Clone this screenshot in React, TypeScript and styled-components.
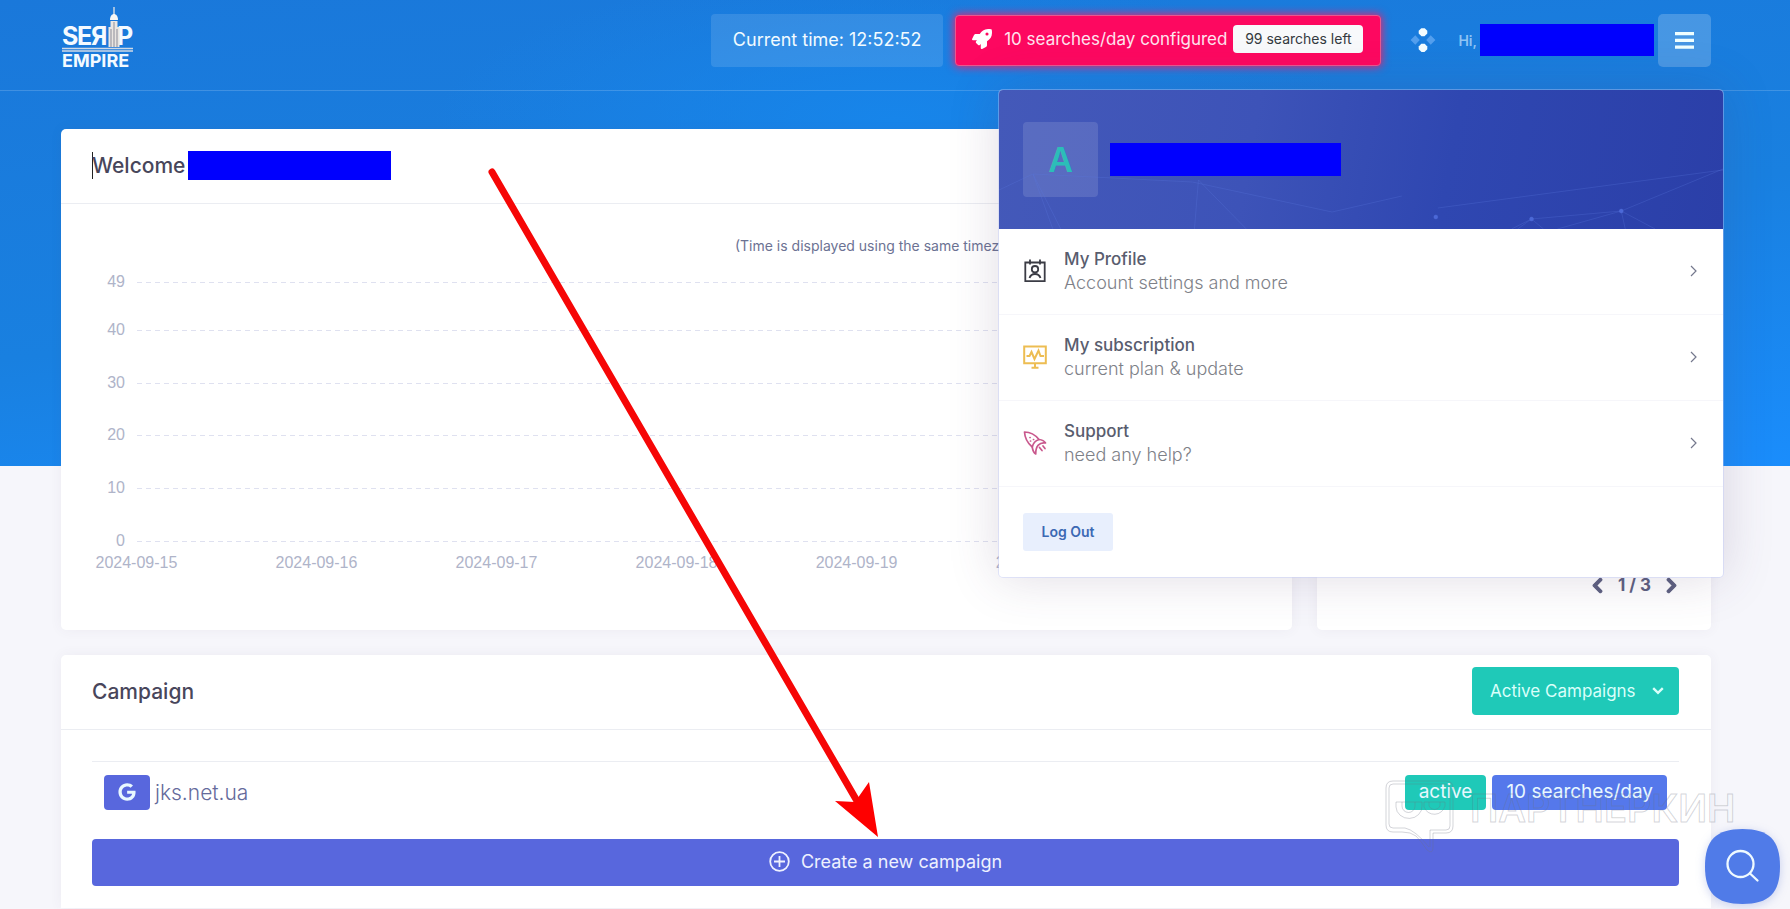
import React from 'react';
import styled, { createGlobalStyle } from 'styled-components';
import { FaChevronLeft, FaChevronRight, FaGoogle, FaRocket } from 'react-icons/fa';

const Global = createGlobalStyle`
  *, *::before, *::after { box-sizing: border-box; }
  body { margin: 0; background: #f6f6fb; font-family: Inter, "Open Sans", sans-serif; color: #48465b; }
  button, select { font: inherit; border: 0; cursor: pointer; }
  a { color: inherit; text-decoration: none; }
  h1, h2, p { margin: 0; }
`;

const Page = styled.div`
  position: relative;
  min-height: 100vh;
  overflow: hidden;
  background:
    radial-gradient(ellipse 460px 150px at 50% 120px, #1785ea, transparent) no-repeat 0 0 / 100% 466px,
    linear-gradient(174deg, #1a78da 0%, #1980e0 55%, #1a8dfc 100%) no-repeat 0 0 / 100% 466px,
    #f6f6fb;
`;

const Header = styled.header`
  position: relative;
  z-index: 2;
  display: flex;
  align-items: center;
  height: 91px;
  padding: 0 79px 10px 61px;
  border-bottom: 1px solid rgba(255, 255, 255, 0.17);
`;

const LogoLink = styled.a`
  display: block;
  margin-right: auto;
  svg { display: block; }
`;

const TimeBox = styled.div`
  width: 232px;
  padding: 13px 0 14px;
  margin-right: 12px;
  border-radius: 4px;
  background: rgba(255, 255, 255, 0.12);
  color: #f2fbff;
  font-size: 18px;
  line-height: 26px;
  text-align: center;
  white-space: nowrap;
`;

const QuotaButton = styled.button`
  display: flex;
  align-items: center;
  height: 51px;
  padding: 0 17px 2px 16px;
  margin-right: 29px;
  border: 1px solid #e8588f;
  border-radius: 4px;
  background: #fd0860;
  box-shadow: 0 0 9px 1px #e9216f;
  color: #ffe3ee;
  font-size: 17px;
  white-space: nowrap;
  > svg { color: #fff; margin-right: 12px; }
`;

const QuotaLeft = styled.span`
  width: 130px;
  margin-left: 6px;
  border-radius: 4px;
  background: #f8f9fb;
  color: #343a40;
  font-size: 14px;
  line-height: 28px;
  text-align: center;
`;

const AppsButton = styled.button`
  display: flex;
  padding: 0;
  margin-right: 22px;
  background: none;
`;

const Greeting = styled.span`
  margin-right: 3px;
  color: #8fc4f4;
  font-size: 14px;
  font-weight: 600;
`;

const Redacted = styled.span<{ $w: number; $h: number }>`
  display: inline-block;
  width: ${(p) => p.$w}px;
  height: ${(p) => p.$h}px;
  background: #0000fe;
`;

const MenuButton = styled.button`
  display: grid;
  place-items: center;
  width: 53px;
  height: 53px;
  margin-left: 4px;
  border-radius: 5px;
  background: rgba(255, 255, 255, 0.2);
`;

const UserPanel = styled.section`
  position: absolute;
  top: 89px;
  right: 66px;
  width: 726px;
  border: 1px solid rgba(190, 200, 250, 0.4);
  border-radius: 5px;
  background: #fff;
  background-clip: padding-box;
  box-shadow: 0 0 50px rgba(82, 63, 105, 0.18);
  overflow: hidden;
`;

const PanelHead = styled.div`
  display: flex;
  align-items: center;
  height: 139px;
  padding: 0 24px;
  background: linear-gradient(100deg, #4459b9 0%, #3d53b8 35%, #2f47b1 62%, #2b3fa8 100%);
`;

const Web = styled.svg`
  position: absolute;
  top: 0;
  left: 0;
  width: 100%;
  height: 139px;
`;

const Avatar = styled.span`
  display: grid;
  place-items: center;
  width: 75px;
  height: 75px;
  margin-right: 12px;
  border-radius: 4px;
  background: rgba(255, 255, 255, 0.12);
  color: #2cbdb8;
  font-size: 34px;
  font-weight: 600;
`;

const PanelItem = styled.a`
  display: flex;
  align-items: center;
  height: 86px;
  padding: 0 26px 2px 24px;
  border-bottom: 1px solid #f6f6fa;
`;

const ItemText = styled.span`
  flex: 1;
  display: grid;
  margin-left: 17px;
  line-height: 24px;
`;

const ItemTitle = styled.span`
  color: #595d6e;
  font-size: 17px;
  font-weight: 500;
`;

const ItemNote = styled.span`
  color: #7e8188;
  font-size: 18px;
  font-weight: 300;
`;

const PanelFoot = styled.div`
  padding: 26px 24px;
`;

const LogOut = styled.button`
  display: block;
  width: 90px;
  border-radius: 3px;
  background: #e8effd;
  color: #3c69b4;
  font-size: 14px;
  font-weight: 600;
  line-height: 38px;
  padding: 0;
`;

const Main = styled.main`
  display: grid;
  gap: 25px;
  padding: 38px 79px 0 61px;
`;

const TopRow = styled.div`
  display: grid;
  grid-template-columns: minmax(0, 25fr) minmax(0, 8fr);
  gap: 25px;
`;

const Card = styled.section<{ $flush?: boolean }>`
  border-radius: ${(p) => (p.$flush ? '5px 5px 0 0' : '5px')};
  background: #fff;
  box-shadow: 0 0 13px rgba(82, 63, 105, 0.06);
`;

const CardHead = styled.div`
  display: flex;
  align-items: center;
  height: 75px;
  padding: 0 32px 2px 31px;
  border-bottom: 1px solid #ebedf2;
`;

const CardTitle = styled.h2`
  display: flex;
  align-items: center;
  font-size: 21px;
  font-weight: 500;
  white-space: nowrap;
  ${Redacted} { margin-left: 3px; }
`;

const Caret = styled.span`
  width: 1px;
  height: 27px;
  margin-right: -1px;
  background: #222;
`;

const ChartBody = styled.div`
  padding: 29px 31px 51px;
`;

const ChartNote = styled.p`
  margin-left: 55%;
  color: #6c7293;
  font-size: 14px;
  line-height: 26px;
  white-space: nowrap;
`;

const Chart = styled.svg`
  display: block;
  width: 100%;
  height: 320px;
  overflow: visible;
  text { fill: #afb4c9; font: 16px "Liberation Sans", Arial, sans-serif; }
  line { stroke: #dfe1f0; stroke-width: 1; stroke-dasharray: 5 4; shape-rendering: crispEdges; }
`;

const PagerCard = styled(Card)`
  display: flex;
  align-items: flex-end;
  justify-content: flex-end;
  padding: 0 31px 33px;
`;

const Pager = styled.nav`
  display: flex;
  align-items: center;
  gap: 12px;
  color: #5d6080;
  font-size: 17px;
  font-weight: 700;
  line-height: 24px;
  button { display: flex; padding: 0; background: none; color: inherit; }
  path { stroke: currentColor; stroke-width: 36; }
`;

const StatusPicker = styled.label`
  display: grid;
  align-items: center;
  margin-left: auto;
  > * { grid-area: 1 / 1; }
  svg { justify-self: end; margin-right: 15px; pointer-events: none; }
`;

const StatusSelect = styled.select`
  appearance: none;
  width: 207px;
  height: 48px;
  padding: 0 18px;
  border-radius: 4px;
  background: #1fc9b8;
  color: #d9fffa;
  font-size: 17px;
`;

const CampaignBody = styled.div`
  padding: 31px 32px 22px 31px;
`;

const CampaignTable = styled.table`
  width: 100%;
  border-collapse: separate;
  border-spacing: 0;
  border-top: 1px solid #ebedf2;
  td { padding: 13px 12px 29px; }
`;

const Cell = styled.div<{ $end?: boolean }>`
  display: flex;
  align-items: center;
  gap: ${(p) => (p.$end ? 6 : 5)}px;
  justify-content: ${(p) => (p.$end ? 'flex-end' : 'flex-start')};
`;

const Badge = styled.span<{ $bg: string }>`
  display: flex;
  align-items: center;
  height: 35px;
  padding: 0 14px 2px;
  border-radius: 4px;
  background: ${(p) => p.$bg};
  color: #e8f8ff;
  font-size: 19px;
`;

const SiteLink = styled.a`
  color: #656a9b;
  font-size: 21px;
  font-weight: 300;
`;

const CreateButton = styled.button`
  display: flex;
  align-items: center;
  justify-content: center;
  gap: 11px;
  width: 100%;
  height: 47px;
  padding: 0 0 2px;
  border-radius: 4px;
  background: #5867dd;
  color: #eef1ff;
  font-size: 18px;
`;

const Arrow = styled.svg`
  position: absolute;
  z-index: 3;
  top: 160px;
  left: 480px;
  pointer-events: none;
`;

const Watermark = styled.svg`
  position: absolute;
  z-index: 3;
  right: 40px;
  top: 777px;
  pointer-events: none;
  fill: none;
  stroke: rgba(110, 114, 130, 0.3);
  text { font: 600 38px Inter, sans-serif; }
`;

const SearchButton = styled.button`
  position: fixed;
  z-index: 4;
  right: 10px;
  bottom: 5px;
  width: 75px;
  height: 75px;
  padding: 0;
  background: none;
  filter: drop-shadow(0 2px 5px rgba(60, 90, 200, 0.25));
  svg { display: block; }
`;

const Logo = () => (
  <svg width="76" height="66" viewBox="0 0 76 66" role="img" aria-label="Serp Empire">
    <g fill="#f4faff" fontFamily="Inter, sans-serif" fontWeight="700">
      <g fontSize="25">
        <text x="1" y="38">S</text>
        <text x="16" y="38">E</text>
        <text x="30" y="38">Я</text>
        <text x="56" y="38">P</text>
      </g>
      <text x="1" y="60" fontSize="18">EMPIRE</text>
    </g>
    <path d="M53 0v9" stroke="#d6dde6" strokeWidth="1.4" />
    <path d="M49 13c0-4 2-6 4-6s4 2 4 6z" fill="#f6f6f4" />
    <path d="M49.500 14h7v6h2v20H47.500V20h2z" fill="#e9e6e2" />
    <path d="M50 22v18M53 15v25M56 22v18" stroke="#8c8d99" strokeWidth="1" />
    <path d="M1 41.500h71M1 44h71" stroke="#cfd9e6" strokeWidth="1.400" />
  </svg>
);

const ProfileIcon = () => (
  <svg width="24" height="26" viewBox="0 0 24 26" fill="none" stroke="#3b3c45" strokeWidth="1.8">
    <path d="M2.300 4.500h19.400v18.700H2.300zM7 1.500v5M17 1.500v5" />
    <circle cx="12" cy="11.200" r="3.200" />
    <path d="M6.500 20c1-3 3-4 5.500-4s4.500 1 5.500 4" />
  </svg>
);

const SubscriptionIcon = () => (
  <svg width="24" height="26" viewBox="0 0 24 26" fill="none" stroke="#edbd52" strokeWidth="2">
    <path d="M1.200 2.500h21.600v16.800H1.200zM12 19.500v4M8.500 23.700h7" />
    <path d="M3.500 12h3l2-4 3 7 4-8.500 2 5.500h3.500" />
  </svg>
);

const SupportIcon = () => (
  <svg width="24" height="26" viewBox="0 0 24 26" fill="none" stroke="#c9588d" strokeWidth="1.700" strokeLinejoin="round" strokeLinecap="round">
    <path d="M1.500 2c5 0 10.500 2.500 14.500 7.500 3.500.3 5.500 1.700 6.500 3.500-6-1-10 3-9.800 11-2-1-3-4-3.500-7C4.500 13 1.800 8 1.500 2z" />
    <path d="M16 9.500c-3 1-6 4-6.700 7.500" />
    <path d="M16.500 17.500l2.500 3M20 16l2 2.500M7 7.500h.1M10.500 9.500h.1M7.500 11h.1" />
  </svg>
);

const Chevron = () => (
  <svg width="7" height="12" viewBox="0 0 7 12" fill="none" stroke="#74788d" strokeWidth="1.200">
    <path d="M1 1l5 5-5 5" />
  </svg>
);

const links = [
  { title: 'My Profile', note: 'Account settings and more', Icon: ProfileIcon },
  { title: 'My subscription', note: 'current plan & update', Icon: SubscriptionIcon },
  { title: 'Support', note: 'need any help?', Icon: SupportIcon },
];

const levels = [
  { label: '49', y: 23 },
  { label: '40', y: 71 },
  { label: '30', y: 124 },
  { label: '20', y: 176 },
  { label: '10', y: 229 },
  { label: '0', y: 282 },
];

const days = ['2024-09-15', '2024-09-16', '2024-09-17', '2024-09-18', '2024-09-19', '2024-09-20', '2024-09-21'];

export default function App() {
  return (
    <Page>
      <Global />
      <Header>
        <LogoLink href="#home"><Logo /></LogoLink>
        <TimeBox>Current time: 12:52:52</TimeBox>
        <QuotaButton type="button">
          <FaRocket size={20} />
          10 searches/day configured
          <QuotaLeft>99 searches left</QuotaLeft>
        </QuotaButton>
        <AppsButton type="button" aria-label="Apps">
          <svg width="26" height="26" viewBox="0 0 26 26">
            <path d="M11.300 1.200h3.400l2.600 2.600v2.800l-2.800 2.700h-3l-2.800-2.700V3.800z" fill="#f4fdff" />
            <path d="M11.300 16.800h3.400l2.600 2.600v2.800l-2.800 2.700h-3l-2.800-2.700v-2.800z" fill="#f4fdff" />
            <path d="M5.300 8.300l4.500 4.700-4.500 4.700L.6 13zM20.700 8.300l4.700 4.700-4.700 4.700-4.500-4.700z" fill="#539fee" />
          </svg>
        </AppsButton>
        <Greeting>Hi,</Greeting>
        <Redacted $w={174} $h={32} />
        <MenuButton type="button" aria-label="Menu">
          <svg width="19" height="17" viewBox="0 0 19 17" fill="#f0ffff">
            <path d="M0 0h19v3.200H0zM0 6.800h19V10H0zM0 13.600h19v3.200H0z" />
          </svg>
        </MenuButton>

        <UserPanel>
          <PanelHead>
            <Web viewBox="0 0 726 139" preserveAspectRatio="none" fill="none" stroke="#5b78e0" strokeOpacity="0.28">
              <path d="M0 100l34-16 160 8 140 30 70-16M34 84l20 55M34 84l28 55M200 90l-4 49M200 90l48 49M520 139l14-10 90-8 34 18M624 121l4 18M534 129l-20 10M534 129l12 10M624 121l102-42M560 139l64-18M440 118l286-38" />
              <circle cx="534" cy="129" r="2" fill="#4b68d8" />
              <circle cx="624" cy="121" r="2" fill="#4b68d8" />
              <circle cx="438" cy="127" r="2" fill="#4b68d8" />
            </Web>
            <Avatar>A</Avatar>
            <Redacted $w={231} $h={33} />
          </PanelHead>
          {links.map(({ title, note, Icon }) => (
            <PanelItem href="#account" key={title}>
              <Icon />
              <ItemText>
                <ItemTitle>{title}</ItemTitle>
                <ItemNote>{note}</ItemNote>
              </ItemText>
              <Chevron />
            </PanelItem>
          ))}
          <PanelFoot>
            <LogOut type="button">Log Out</LogOut>
          </PanelFoot>
        </UserPanel>
      </Header>

      <Main>
        <TopRow>
          <Card>
            <CardHead>
              <CardTitle><Caret />Welcome<Redacted $w={203} $h={29} /></CardTitle>
            </CardHead>
            <ChartBody>
              <ChartNote>(Time is displayed using the same timezone)</ChartNote>
              <Chart role="img" aria-label="Searches per day">
                {levels.map((l) => (
                  <React.Fragment key={l.label}>
                    <text x="33" y={l.y + 5} textAnchor="end">{l.label}</text>
                    <line x1="45" x2="96.2%" y1={l.y} y2={l.y} />
                  </React.Fragment>
                ))}
                {days.map((d, i) => (
                  <text key={d} x={`${3.8 + i * 15.4}%`} y="309" textAnchor="middle">{d}</text>
                ))}
              </Chart>
            </ChartBody>
          </Card>
          <PagerCard>
            <Pager aria-label="Pages">
              <button type="button" aria-label="Previous"><FaChevronLeft size={17} /></button>
              1 / 3
              <button type="button" aria-label="Next"><FaChevronRight size={17} /></button>
            </Pager>
          </PagerCard>
        </TopRow>

        <Card $flush>
          <CardHead>
            <CardTitle>Campaign</CardTitle>
            <StatusPicker>
              <StatusSelect aria-label="Campaign status" defaultValue="active">
                <option value="active">Active Campaigns</option>
              </StatusSelect>
              <svg width="12" height="8" viewBox="0 0 12 8" fill="none" stroke="#d9fffa" strokeWidth="2.400">
                <path d="M1.200 1.200L6 5.800l4.800-4.600" />
              </svg>
            </StatusPicker>
          </CardHead>
          <CampaignBody>
            <CampaignTable>
              <tbody>
                <tr>
                  <td>
                    <Cell>
                      <Badge $bg="#5867dd"><FaGoogle size={18} /></Badge>
                      <SiteLink href="#campaign">jks.net.ua</SiteLink>
                    </Cell>
                  </td>
                  <td>
                    <Cell $end>
                      <Badge $bg="#1fc9b8">active</Badge>
                      <Badge $bg="#5578eb">10 searches/day</Badge>
                    </Cell>
                  </td>
                </tr>
              </tbody>
            </CampaignTable>
            <CreateButton type="button">
              <svg width="21" height="21" viewBox="0 0 21 21" fill="none" stroke="#eef1ff" strokeWidth="1.800">
                <circle cx="10.500" cy="10.500" r="9.300" />
                <path d="M10.500 5v11M5 10.500h11" />
              </svg>
              Create a new campaign
            </CreateButton>
          </CampaignBody>
        </Card>
      </Main>

      <Arrow width="410" height="690" viewBox="0 0 410 690" fill="#fe0000">
        <path d="M12 12L377 641" stroke="#f60606" strokeWidth="7" strokeLinecap="round" />
        <path d="M398 677l-43-36 20 1 14-20z" />
      </Arrow>

      <Watermark width="366" height="82" viewBox="0 0 366 82" aria-hidden="true">
        <path d="M9 4h53q7 0 7 7v38q0 7-7 7H49v14q0 8-6 3-6-9-11-14-5-4-14-4H9q-7 0-7-7V11q0-7 7-7z" />
        <path d="M9 7h53q4 0 4 4v38q0 4-4 4H46v17M9 7Q5 7 5 11v36q0 4 4 4h12q10 2 24 19" />
        <path d="M12 25h26v4a12 11 0 0 1-26 1zM40 25h21v4a11 11 0 0 1-21 1zM18 25v4a6 6 0 0 0 13 0v-4M45 25v4a6 6 0 0 0 11 0v-4" />
        <text x="86" y="45">ПАРТНЕРКИН</text>
      </Watermark>

      <SearchButton type="button" aria-label="Search">
        <svg width="75" height="75" viewBox="0 0 75 75">
          <path d="M37.500 0C64 0 75 11 75 37.500S64 75 37.500 75 0 64 0 37.500 11 0 37.500 0z" fill="#507be8" />
          <g fill="none" stroke="#effaff" strokeWidth="2.300" strokeLinecap="round">
            <circle cx="35.500" cy="35" r="13" />
            <path d="M45 44.500l7.500 7" />
          </g>
        </svg>
      </SearchButton>
    </Page>
  );
}
